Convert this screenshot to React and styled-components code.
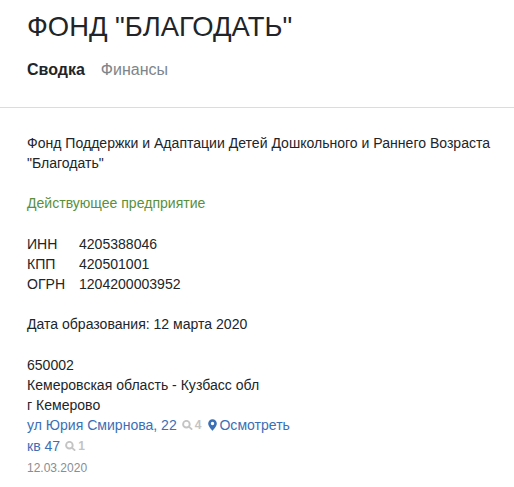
import styled, { createGlobalStyle } from "styled-components";

const GlobalStyle = createGlobalStyle`
  html, body {
    margin: 0;
    padding: 0;
    background: #fff;
  }
  body {
    font-family: "Liberation Sans", Arial, sans-serif;
    font-size: 14.06px;
    line-height: 20.2px;
    color: #212529;
  }
`;

const Page = styled.div`
  width: 514px;
  height: 487px;
  overflow: hidden;
`;

const Header = styled.header`
  padding: 8px 27px 0;
  height: 99px;
  border-bottom: 1px solid #dcdcdc;
`;

const Title = styled.h1`
  margin: 0;
  font-size: 27.4px;
  line-height: 38px;
  font-weight: 400;
  color: #212529;
`;

const Tabs = styled.nav`
  display: flex;
  gap: 16px;
  margin-top: 14px;
  font-size: 16px;
  line-height: 20px;
`;

const Tab = styled.span`
  color: ${(p) => (p.$active ? "#212529" : "#7d858c")};
  font-weight: ${(p) => (p.$active ? 700 : 400)};
`;

const Content = styled.main`
  padding: 24.6px 20px 0 27px;
`;

const Block = styled.p`
  margin: 0 0 20.2px;
`;

const Status = styled(Block)`
  color: #5a8f3c;
`;

const Codes = styled.dl`
  display: grid;
  grid-template-columns: 52px 1fr;
  margin: 0 0 20.2px;
`;

const CodeName = styled.dt`
  font-weight: 400;
`;

const CodeValue = styled.dd`
  margin: 0;
`;

const Line = styled.div`
  display: flex;
  align-items: center;
  height: 20.2px;
`;

const AddressLink = styled.a`
  color: #3b6fb6;
  text-decoration: none;
`;

const Count = styled.span`
  display: inline-flex;
  align-items: center;
  gap: 2px;
  margin-left: 5px;
  color: #c4c4c4;
  font-size: 12px;
  font-weight: 700;
`;

const MapLink = styled(AddressLink)`
  display: inline-flex;
  align-items: center;
  gap: 2px;
  margin-left: 7px;
`;

const DateLine = styled.div`
  margin-top: 2px;
  font-size: 12px;
  line-height: 20px;
  color: #868e96;
`;

const SearchIcon = () => (
  <svg width="11" height="10" viewBox="0 0 11 10" fill="none" stroke="#c4c4c4" strokeWidth="1.9">
    <circle cx="4.4" cy="4.2" r="3.3" />
    <path d="M6.8 6.6l3.4 3" />
  </svg>
);

const PinIcon = () => (
  <svg width="9" height="12" viewBox="0 0 10 13">
    <path
      fillRule="evenodd"
      fill="#3b6fb6"
      d="M5 0a4.8 4.8 0 0 1 4.8 4.8C9.8 7.6 6.6 11 5 13 3.4 11 .2 7.6.2 4.8A4.8 4.8 0 0 1 5 0zm0 2.9a1.9 1.9 0 1 0 0 3.8 1.9 1.9 0 0 0 0-3.8z"
    />
  </svg>
);

const App = () => {
  return (
    <Page>
      <GlobalStyle />
      <Header>
        <Title>ФОНД "БЛАГОДАТЬ"</Title>
        <Tabs>
          <Tab $active>Сводка</Tab>
          <Tab>Финансы</Tab>
        </Tabs>
      </Header>
      <Content>
        <Block>Фонд Поддержки и Адаптации Детей Дошкольного и Раннего Возраста "Благодать"</Block>
        <Status>Действующее предприятие</Status>
        <Codes>
          <CodeName>ИНН</CodeName>
          <CodeValue>4205388046</CodeValue>
          <CodeName>КПП</CodeName>
          <CodeValue>420501001</CodeValue>
          <CodeName>ОГРН</CodeName>
          <CodeValue>1204200003952</CodeValue>
        </Codes>
        <Block>Дата образования: 12 марта 2020</Block>
        <Line>650002</Line>
        <Line>Кемеровская область - Кузбасс обл</Line>
        <Line>г Кемерово</Line>
        <Line>
          <AddressLink>ул Юрия Смирнова, 22</AddressLink>
          <Count><SearchIcon />4</Count>
          <MapLink><PinIcon />Осмотреть</MapLink>
        </Line>
        <Line>
          <AddressLink>кв 47</AddressLink>
          <Count><SearchIcon />1</Count>
        </Line>
        <DateLine>12.03.2020</DateLine>
      </Content>
    </Page>
  );
};

export default App;
